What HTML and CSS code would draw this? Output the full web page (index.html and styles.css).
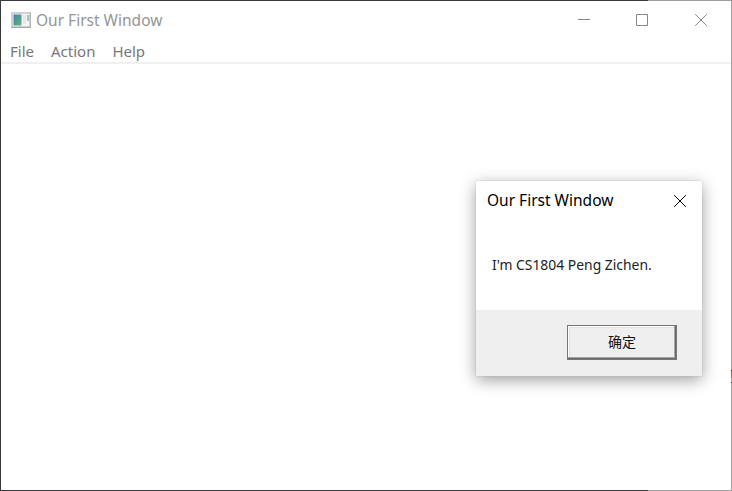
FILE: index.html
```html
<!DOCTYPE html>
<html lang="en">
<head>
<meta charset="utf-8">
<title>Our First Window</title>
<link rel="stylesheet" href="styles.css">
</head>
<body>
<div class="window">
  <header class="titlebar">
    <svg class="app-icon" width="20" height="16" viewBox="0 0 20 16">
      <defs><linearGradient id="pane" x1="0" y1="0" x2="1" y2="1"><stop offset="0" stop-color="#4a80a5"/><stop offset="1" stop-color="#5fb67c"/></linearGradient></defs>
      <rect width="20" height="16" fill="#cfd0d5"/>
      <rect y="15" width="20" height="1" fill="#a3a6ab"/>
      <rect x="19" width="1" height="16" fill="#b4b6bc"/>
      <rect x="2" y="2" width="16" height="12" fill="#f4f5f4"/>
      <rect x="2.5" y="2.5" width="8" height="11" fill="url(#pane)"/>
      <rect x="12" y="3" width="3" height="9" fill="#e6e9e7"/>
      <rect x="16" y="3" width="2" height="6" fill="#a5c5b9"/>
    </svg>
    <span class="title">Our First Window</span>
    <div class="controls">
      <svg width="12" height="12" viewBox="0 0 12 12"><path d="M0 5.5h12"/></svg>
      <svg width="12" height="12" viewBox="0 0 12 12"><path d="M.5.5h11v11H.5z"/></svg>
      <svg class="close" width="12" height="12" viewBox="0 0 12 12"><path d="M.2.2l11.6 11.6M11.8.2L.2 11.8"/></svg>
    </div>
  </header>
  <nav class="menu"><span>File</span><span>Action</span><span>Help</span></nav>
</div>
<div class="dialog">
  <div class="dialog-head">
    <span class="title">Our First Window</span>
    <svg width="12" height="12" viewBox="0 0 12 12"><path d="M.2.2l11.6 11.6M11.8.2L.2 11.8"/></svg>
  </div>
  <div class="message"><span>I'm CS1804 Peng Zichen.</span></div>
  <div class="dialog-foot"><button class="ok">确定</button></div>
</div>
<i class="edge-mark"></i>
</body>
</html>
```
FILE: styles.css
```css
* { box-sizing: border-box; }
body {
  margin: 0;
  width: 732px;
  height: 491px;
  overflow: hidden;
  background: linear-gradient(#9f9f9f, #9f9f9f) 648px 0 no-repeat #39393b;
  font-family: "Noto Sans", "Noto Sans CJK SC", sans-serif;
}
.window {
  display: flex;
  flex-direction: column;
  width: 732px;
  height: 491px;
  padding: 1px;
}
.window::after { content: ""; flex: 1; background: #fff; }
.titlebar {
  display: flex;
  align-items: center;
  height: 38px;
  padding: 0 24px 0 10px;
  background: #fff;
}
.app-icon { margin-right: 5px; }
.title {
  font-size: 15.5px;
  line-height: 20px;
  white-space: nowrap;
}
.titlebar .title { color: #969696; padding-bottom: 1px; }
.controls {
  display: flex;
  gap: 46px;
  margin-left: auto;
}
.controls svg { fill: none; stroke: #888; }
.controls .close { margin-left: 1px; }
.menu {
  display: flex;
  height: 25px;
  padding-left: 9px;
  gap: 17px;
  background: #fff;
  border-bottom: 2px solid #f0f0f0;
  color: #777;
  font-size: 15px;
  line-height: 24px;
}
.dialog {
  position: absolute;
  left: 476px;
  top: 181px;
  width: 226px;
  height: 195px;
  display: flex;
  flex-direction: column;
  background: #fff;
  box-shadow: 0 0 1px #aaa, 0 4px 15px rgba(0, 0, 0, .38);
}
.dialog-head {
  display: flex;
  align-items: center;
  justify-content: space-between;
  height: 39px;
  padding: 0 16px 0 11px;
}
.dialog-head .title { padding-bottom: 1px; }
.dialog-head svg { fill: none; stroke: #000; }
.message {
  flex: 1;
  padding: 35px 0 0 16px;
  color: #222;
  font-size: 13.9px;
  line-height: 20px;
  white-space: nowrap;
}
.dialog-foot {
  height: 66px;
  padding: 15px 25px 0 0;
  display: flex;
  justify-content: flex-end;
  background: #efefef;
}
.ok {
  width: 110px;
  height: 35px;
  padding: 0 0 4px;
  border: 1px solid #767676;
  background: #efefef;
  box-shadow: inset -1px -1px #6a6a6a, inset -2px -2px #a5a5a5, inset 1px 1px #fff, inset 2px 2px #e3e3e3;
  font: 14px/20px "Noto Sans CJK SC", sans-serif;
  color: #111;
}
.edge-mark {
  position: absolute;
  left: 731px;
  top: 370px;
  width: 1px;
  height: 13px;
  background: linear-gradient(#333 1px, #987044 1px 8px, #aaa 8px 12px, #333 12px);
}
```
